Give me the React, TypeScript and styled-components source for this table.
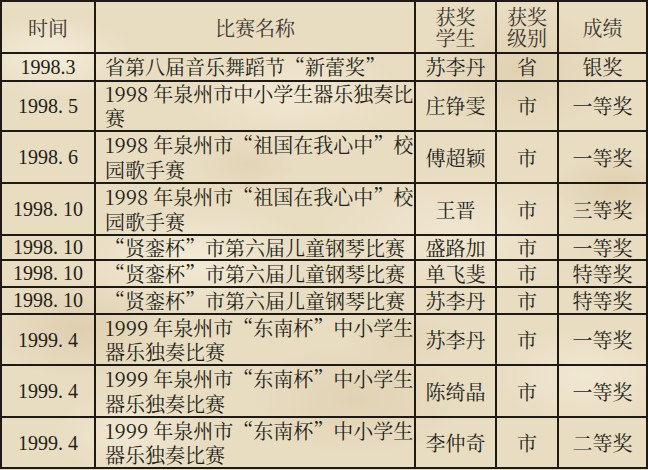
import React from "react";
import styled, { createGlobalStyle } from "styled-components";

const Global = createGlobalStyle`
  html, body { margin: 0; padding: 0; }
  body { background: #e9ddc3; }
`;

const Page = styled.div`
  width: 648px;
  height: 470px;
  overflow: hidden;
  background-color: #e8dcc1;
  background-image:
    radial-gradient(ellipse 120px 60px at 8% 12%, rgba(255, 250, 235, 0.55), transparent 70%),
    radial-gradient(ellipse 160px 70px at 45% 20%, rgba(250, 243, 225, 0.5), transparent 70%),
    radial-gradient(ellipse 140px 90px at 80% 15%, rgba(214, 194, 156, 0.4), transparent 70%),
    radial-gradient(ellipse 180px 80px at 30% 55%, rgba(252, 246, 230, 0.55), transparent 70%),
    radial-gradient(ellipse 120px 70px at 12% 70%, rgba(210, 188, 148, 0.4), transparent 70%),
    radial-gradient(ellipse 200px 90px at 70% 50%, rgba(247, 240, 222, 0.5), transparent 70%),
    radial-gradient(ellipse 150px 80px at 55% 85%, rgba(212, 192, 152, 0.35), transparent 70%),
    radial-gradient(ellipse 130px 70px at 90% 80%, rgba(250, 244, 228, 0.5), transparent 70%),
    radial-gradient(ellipse 110px 60px at 20% 92%, rgba(250, 244, 228, 0.5), transparent 70%),
    radial-gradient(ellipse 90px 50px at 95% 40%, rgba(208, 186, 146, 0.4), transparent 70%),
    radial-gradient(ellipse 70px 40px at 38% 35%, rgba(214, 194, 156, 0.3), transparent 70%),
    radial-gradient(ellipse 80px 40px at 62% 72%, rgba(214, 194, 156, 0.3), transparent 70%);
  font-family: "Noto Serif CJK SC", "Noto Sans CJK SC", serif;
  color: #231f1a;
`;

const Table = styled.table`
  border-collapse: collapse;
  table-layout: fixed;
  width: 646px;
  font-size: 20px;
`;

const Row = styled.tr<{ $h: number; $lh: number }>`
  height: ${(p) => p.$h}px;
  & > td,
  & > th {
    line-height: ${(p) => p.$lh}px;
  }
`;

const Head = styled.th`
  border: 2px solid #1d1a16;
  padding: 0;
  font-weight: normal;
  color: #3b362f;
  text-align: center;
  vertical-align: middle;
`;

const Cell = styled.td<{ $left?: boolean; $latin?: boolean }>`
  border: 2px solid #1d1a16;
  padding: ${(p) => (p.$left ? "0 0 0 9px" : "0")};
  text-align: ${(p) => (p.$left ? "left" : "center")};
  vertical-align: middle;
  white-space: nowrap;
  font-family: ${(p) =>
    p.$latin
      ? `"Liberation Serif", serif`
      : `"Noto Serif CJK SC", "Noto Sans CJK SC", serif`};
`;

type Rec = {
  date: string;
  name: React.ReactNode;
  who: string;
  lvl: string;
  res: string;
  h: number;
  lines: number;
};

const rows: Rec[] = [
  { date: "1998.3", name: "省第八届音乐舞蹈节“新蕾奖”", who: "苏李丹", lvl: "省", res: "银奖", h: 28, lines: 1 },
  { date: "1998. 5", name: <>1998 年泉州市中小学生器乐独奏比<br />赛</>, who: "庄铮雯", lvl: "市", res: "一等奖", h: 50, lines: 2 },
  { date: "1998. 6", name: <>1998 年泉州市“祖国在我心中”校<br />园歌手赛</>, who: "傅超颖", lvl: "市", res: "一等奖", h: 52, lines: 2 },
  { date: "1998. 10", name: <>1998 年泉州市“祖国在我心中”校<br />园歌手赛</>, who: "王晋", lvl: "市", res: "三等奖", h: 52, lines: 2 },
  { date: "1998. 10", name: "“贤銮杯”市第六届儿童钢琴比赛", who: "盛路加", lvl: "市", res: "一等奖", h: 25, lines: 1 },
  { date: "1998. 10", name: "“贤銮杯”市第六届儿童钢琴比赛", who: "单飞斐", lvl: "市", res: "特等奖", h: 27, lines: 1 },
  { date: "1998. 10", name: "“贤銮杯”市第六届儿童钢琴比赛", who: "苏李丹", lvl: "市", res: "特等奖", h: 27, lines: 1 },
  { date: "1999. 4", name: <>1999 年泉州市“东南杯”中小学生<br />器乐独奏比赛</>, who: "苏李丹", lvl: "市", res: "一等奖", h: 51, lines: 2 },
  { date: "1999. 4", name: <>1999 年泉州市“东南杯”中小学生<br />器乐独奏比赛</>, who: "陈绮晶", lvl: "市", res: "一等奖", h: 52, lines: 2 },
  { date: "1999. 4", name: <>1999 年泉州市“东南杯”中小学生<br />器乐独奏比赛</>, who: "李仲奇", lvl: "市", res: "二等奖", h: 51, lines: 2 },
];

export default function App() {
  return (
    <Page lang="zh-CN">
      <Global />
      <Table>
        <colgroup>
          <col style={{ width: 94 }} />
          <col style={{ width: 320 }} />
          <col style={{ width: 81 }} />
          <col style={{ width: 62 }} />
          <col style={{ width: 89 }} />
        </colgroup>
        <thead>
          <Row $h={52} $lh={21}>
            <Head>时间</Head>
            <Head>比赛名称</Head>
            <Head>获奖<br />学生</Head>
            <Head>获奖<br />级别</Head>
            <Head>成绩</Head>
          </Row>
        </thead>
        <tbody>
          {rows.map((r, i) => (
            <Row key={i} $h={r.h} $lh={Math.floor((r.h - 2) / r.lines)}>
              <Cell $latin>{r.date}</Cell>
              <Cell $left>{r.name}</Cell>
              <Cell>{r.who}</Cell>
              <Cell>{r.lvl}</Cell>
              <Cell>{r.res}</Cell>
            </Row>
          ))}
        </tbody>
      </Table>
    </Page>
  );
}
